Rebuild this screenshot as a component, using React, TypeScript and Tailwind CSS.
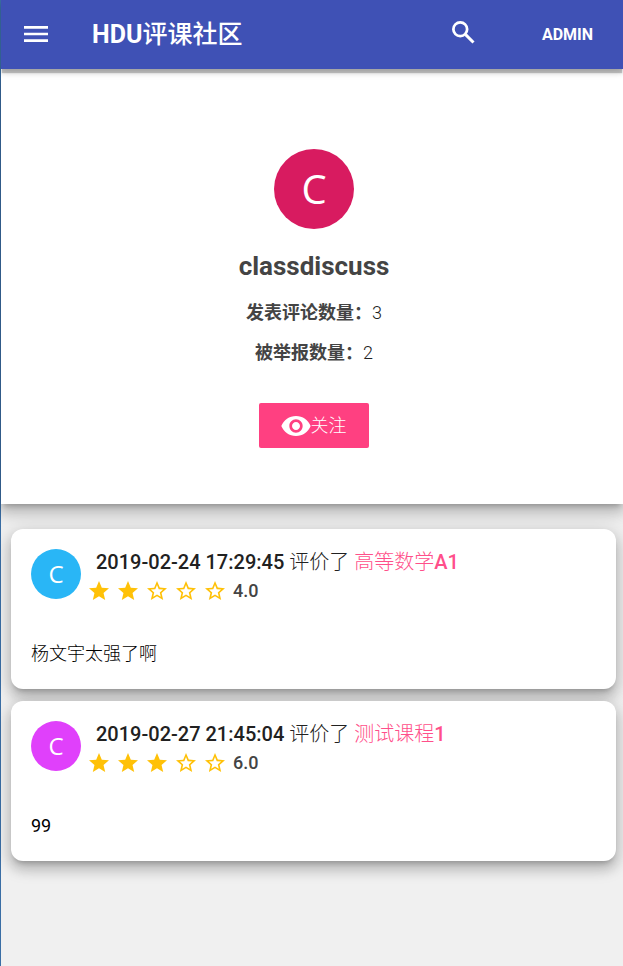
import { MdMenu, MdRemoveRedEye, MdStar, MdStarBorder } from "react-icons/md";

type Review = {
  time: string;
  course: string;
  stars: number;
  score: string;
  text: string;
  color: string;
};

const reviews: Review[] = [
  { time: "2019-02-24 17:29:45", course: "高等数学A1", stars: 2, score: "4.0", text: "杨文宇太强了啊", color: "bg-[#29b6f6]" },
  { time: "2019-02-27 21:45:04", course: "测试课程1", stars: 3, score: "6.0", text: "99", color: "bg-[#e040fb]" },
];

const cardShadow =
  "shadow-[0_5px_5px_-3px_rgba(0,0,0,0.2),0_8px_12px_1px_rgba(0,0,0,0.14),0_4px_18px_3px_rgba(0,0,0,0.14)]";

function SearchIcon() {
  return (
    <svg viewBox="0 0 24 24" className="size-[30px]" fill="none" stroke="currentColor" strokeWidth="2.2" aria-hidden="true">
      <circle cx="9" cy="9" r="5.5" />
      <path d="M13.3 13.3 L19.6 19.6" strokeWidth="2.4" />
    </svg>
  );
}

function Stars({ count }: { count: number }) {
  return (
    <span className="flex gap-[5px]" role="img" aria-label={`${count} / 5`}>
      {[1, 2, 3, 4, 5].map((n) =>
        n <= count ? <MdStar key={n} className="size-6" /> : <MdStarBorder key={n} className="size-6" />
      )}
    </span>
  );
}

function ReviewCard({ review }: { review: Review }) {
  return (
    <article className={`rounded-xl bg-white p-5 ${cardShadow}`}>
      <header className="flex">
        <div
          className={`flex size-[50px] shrink-0 items-center justify-center rounded-full font-['Open_Sans','Noto_Sans',sans-serif] text-2xl font-normal text-white ${review.color}`}
        >
          C
        </div>
        <div className="pl-1.5">
          <h2 className="pl-[9px] text-xl leading-[26px] font-medium text-[#212121]">
            {review.time} <span className="font-light">评价了</span>{" "}
            <a href="#course" className="text-[#ff4f8a]">
              <span className="font-light">{review.course.replace(/[A-Z0-9]+$/, "")}</span>
              {review.course.replace(/^[^A-Z0-9]+/, "")}
            </a>
          </h2>
          <div className="mt-1.5 flex h-5 items-center gap-1.5 text-[#ffc107]">
            <Stars count={review.stars} />
            <span className="text-lg leading-5 font-medium text-[#444444]">{review.score}</span>
          </div>
        </div>
      </header>
      <p className={`mt-[39px] mb-px text-lg leading-7 text-black ${/^\d+$/.test(review.text) ? "font-normal" : "font-light"}`}>
        {review.text}
      </p>
    </article>
  );
}

export default function App() {
  return (
    <div className="min-h-screen border-l border-[#3a6ea5] bg-[#f0f0f0] font-[Roboto,'Noto_Sans_CJK_SC',sans-serif]">
      <header className="relative z-10 flex h-[69px] items-center bg-[#3f51b5] pr-[30px] pl-[19px] text-white shadow-[0_5px_1px_-1px_rgba(0,0,0,0.2),0_4px_5px_0_rgba(0,0,0,0.14),0_1px_10px_0_rgba(0,0,0,0.12)]">
        <button type="button" aria-label="菜单" className="pb-0.5">
          <MdMenu className="size-8" />
        </button>
        <h1 className="ml-10 flex-1 text-[25px] font-medium">
          <span className="font-bold">HDU</span>评课社区
        </h1>
        <button type="button" aria-label="搜索" className="mr-[63px] pb-1">
          <SearchIcon />
        </button>
        <a href="#admin" className="text-base font-bold">ADMIN</a>
      </header>

      <section
        className={`flex flex-col items-center bg-white pt-20 pb-14 pl-1 ${cardShadow}`}
      >
        <div className="flex size-20 items-center justify-center rounded-full bg-[#d81b60] font-['Open_Sans','Noto_Sans',sans-serif] text-[40px] font-normal text-white">
          C
        </div>
        <h2 className="mt-5 text-[26px] leading-[34px] font-bold text-[#444444]">classdiscuss</h2>
        <p className="mt-[18px] text-lg leading-6 font-light text-[#212121]">
          <strong className="font-bold text-[#444444]">发表评论数量：</strong>3
        </p>
        <p className="mt-4 text-lg leading-6 font-light text-[#212121]">
          <strong className="font-bold text-[#444444]">被举报数量：</strong>2
        </p>
        <button
          type="button"
          className="mt-[38px] flex h-[45px] w-[110px] items-center justify-center rounded-xs bg-[#ff4081] pr-0.5 text-lg font-light text-white"
        >
          <MdRemoveRedEye className="-mr-px size-8" />
          关注
        </button>
      </section>

      <main className="flex flex-col gap-3 pt-[25px] pr-[7px] pb-6 pl-2.5">
        {reviews.map((review) => (
          <ReviewCard key={review.time} review={review} />
        ))}
      </main>
    </div>
  );
}
